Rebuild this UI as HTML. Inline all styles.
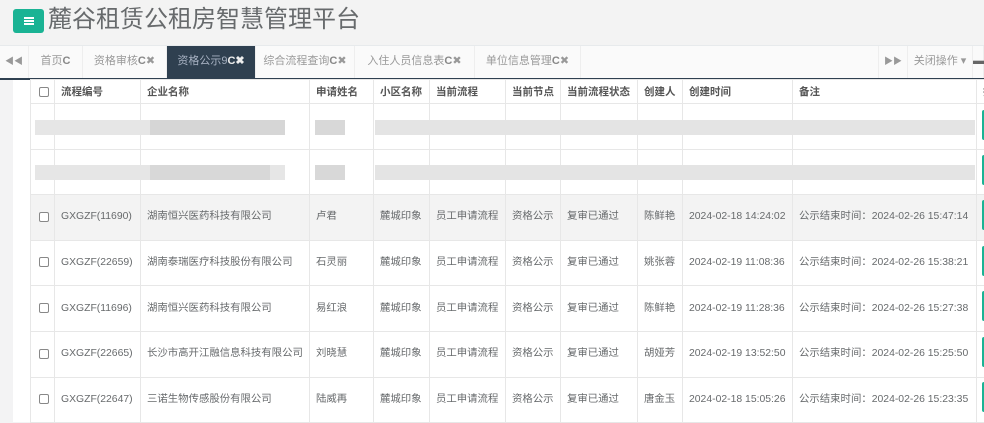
<!DOCTYPE html>
<html><head><meta charset="utf-8"><style>
*{margin:0;padding:0;box-sizing:border-box}
body{width:984px;height:422px;overflow:hidden;background:#f3f3f4;font-family:"Liberation Sans","Noto Sans CJK SC",sans-serif;position:relative}
.hdr{position:absolute;left:0;top:0;width:984px;height:45px;background:#f3f3f3}
.menu{position:absolute;left:13px;top:9px;width:31px;height:24px;background:#1ab394;border-radius:3px}
.menu i{position:absolute;left:11px;width:10px;height:2px;background:#fff}
.title{position:absolute;left:48px;top:5px;font-size:24px;color:#676a6c;line-height:30px}
.tabs{position:absolute;left:0;top:45px;width:984px;background:#fafafa;border-top:1px solid #e7eaec;border-bottom:2px solid #2f4050;height:35px}
.tab{position:absolute;top:0;height:32px;line-height:30px;font-size:11px;color:#999;text-align:center;border-right:1px solid #eee}
.tab.act{background:#2f4050;color:#a7b1c2}
.tab b{color:#888}
.tab.act b{color:#eee}
.wrap{position:absolute;left:13px;top:80px;width:971px;height:342px;background:#fff}
table{position:absolute;left:30px;top:79px;width:956px;border-collapse:collapse;table-layout:fixed;font-size:10.4px;color:#676a6c}
td,th{border:1px solid #e7e7e7;padding:0 0 0 6px;white-space:nowrap;overflow:hidden;text-align:left;vertical-align:middle;line-height:14px}
th{height:24px;font-weight:bold;color:#555;font-size:10.5px}
td{height:45.6px}
tr.g td{background:#f3f3f3}
.cb{display:inline-block;width:10px;height:10px;border:1px solid #888;border-radius:2px;background:#fff;margin-left:2px;vertical-align:middle}
.bar{position:absolute;height:15px;background:#e2e2e2}
.btn{position:absolute;left:982px;width:4px;height:30px;background:#1ab394;border-radius:3px}
</style></head><body>
<div class="hdr"><div class="menu"><i style="top:8px"></i><i style="top:11px"></i><i style="top:14px"></i></div>
<div class="title">麓谷租赁公租房智慧管理平台</div></div>
<div class="tabs">
<div class="tab" style="left:0;width:29px;color:#999;font-size:9px">◀◀</div>
<div class="tab" style="left:29px;width:54px">首页<b>C</b></div>
<div class="tab" style="left:83px;width:84px">资格审核<b>C</b>✖</div>
<div class="tab act" style="left:167px;width:89px">资格公示9<b>C✖</b></div>
<div class="tab" style="left:256px;width:99px">综合流程查询<b>C</b>✖</div>
<div class="tab" style="left:355px;width:120px">入住人员信息表<b>C</b>✖</div>
<div class="tab" style="left:475px;width:106px">单位信息管理<b>C</b>✖</div>
<div class="tab" style="left:878px;width:30px;border-left:1px solid #eee;font-size:9px">▶▶</div>
<div class="tab" style="left:908px;width:65px">关闭操作 ▾</div>
<div class="tab" style="left:973px;width:11px;color:#666">▬</div>
</div>
<div class="wrap"></div>
<table>
<colgroup><col style="width:24px"><col style="width:86px"><col style="width:169px"><col style="width:64px"><col style="width:56px"><col style="width:76px"><col style="width:55px"><col style="width:77px"><col style="width:45px"><col style="width:110px"><col style="width:184px"><col style="width:10px"></colgroup>
<tr><th><span class="cb"></span></th><th>流程编号</th><th>企业名称</th><th>申请姓名</th><th>小区名称</th><th>当前流程</th><th>当前节点</th><th>当前流程状态</th><th>创建人</th><th>创建时间</th><th>备注</th><th>操</th></tr>
<tr><td></td><td></td><td></td><td></td><td></td><td></td><td></td><td></td><td></td><td></td><td></td><td></td></tr>
<tr><td></td><td></td><td></td><td></td><td></td><td></td><td></td><td></td><td></td><td></td><td></td><td></td></tr>
<tr class="g"><td><span class="cb"></span></td><td>GXGZF(11690)</td><td>湖南恒兴医药科技有限公司</td><td>卢君</td><td>麓城印象</td><td>员工申请流程</td><td>资格公示</td><td>复审已通过</td><td>陈鲜艳</td><td>2024-02-18 14:24:02</td><td>公示结束时间：2024-02-26 15:47:14</td><td></td></tr>
<tr><td><span class="cb"></span></td><td>GXGZF(22659)</td><td>湖南泰瑞医疗科技股份有限公司</td><td>石灵丽</td><td>麓城印象</td><td>员工申请流程</td><td>资格公示</td><td>复审已通过</td><td>姚张蓉</td><td>2024-02-19 11:08:36</td><td>公示结束时间：2024-02-26 15:38:21</td><td></td></tr>
<tr><td><span class="cb"></span></td><td>GXGZF(11696)</td><td>湖南恒兴医药科技有限公司</td><td>易红浪</td><td>麓城印象</td><td>员工申请流程</td><td>资格公示</td><td>复审已通过</td><td>陈鲜艳</td><td>2024-02-19 11:28:36</td><td>公示结束时间：2024-02-26 15:27:38</td><td></td></tr>
<tr><td><span class="cb"></span></td><td>GXGZF(22665)</td><td>长沙市高开江融信息科技有限公司</td><td>刘晓慧</td><td>麓城印象</td><td>员工申请流程</td><td>资格公示</td><td>复审已通过</td><td>胡娅芳</td><td>2024-02-19 13:52:50</td><td>公示结束时间：2024-02-26 15:25:50</td><td></td></tr>
<tr><td><span class="cb"></span></td><td>GXGZF(22647)</td><td>三诺生物传感股份有限公司</td><td>陆威再</td><td>麓城印象</td><td>员工申请流程</td><td>资格公示</td><td>复审已通过</td><td>唐金玉</td><td>2024-02-18 15:05:26</td><td>公示结束时间：2024-02-26 15:23:35</td><td></td></tr>
</table>
<div class="bar" style="left:35px;top:120px;width:250px;background:#e6e6e6"></div>
<div class="bar" style="left:150px;top:120px;width:135px;background:#d6d6d6"></div>
<div class="bar" style="left:315px;top:120px;width:30px;background:#d8d8d8"></div>
<div class="bar" style="left:375px;top:120px;width:600px;background:#e4e4e4"></div>
<div class="bar" style="left:35px;top:165px;width:250px;background:#e6e6e6"></div>
<div class="bar" style="left:150px;top:165px;width:120px;background:#d8d8d8"></div>
<div class="bar" style="left:315px;top:165px;width:30px;background:#d8d8d8"></div>
<div class="bar" style="left:375px;top:165px;width:600px;background:#e4e4e4"></div>
<div class="btn" style="top:110px"></div><div class="btn" style="top:155px"></div>
<div class="btn" style="top:200px"></div><div class="btn" style="top:246px"></div>
<div class="btn" style="top:291px"></div><div class="btn" style="top:337px"></div>
<div class="btn" style="top:382px"></div>
</body></html>
